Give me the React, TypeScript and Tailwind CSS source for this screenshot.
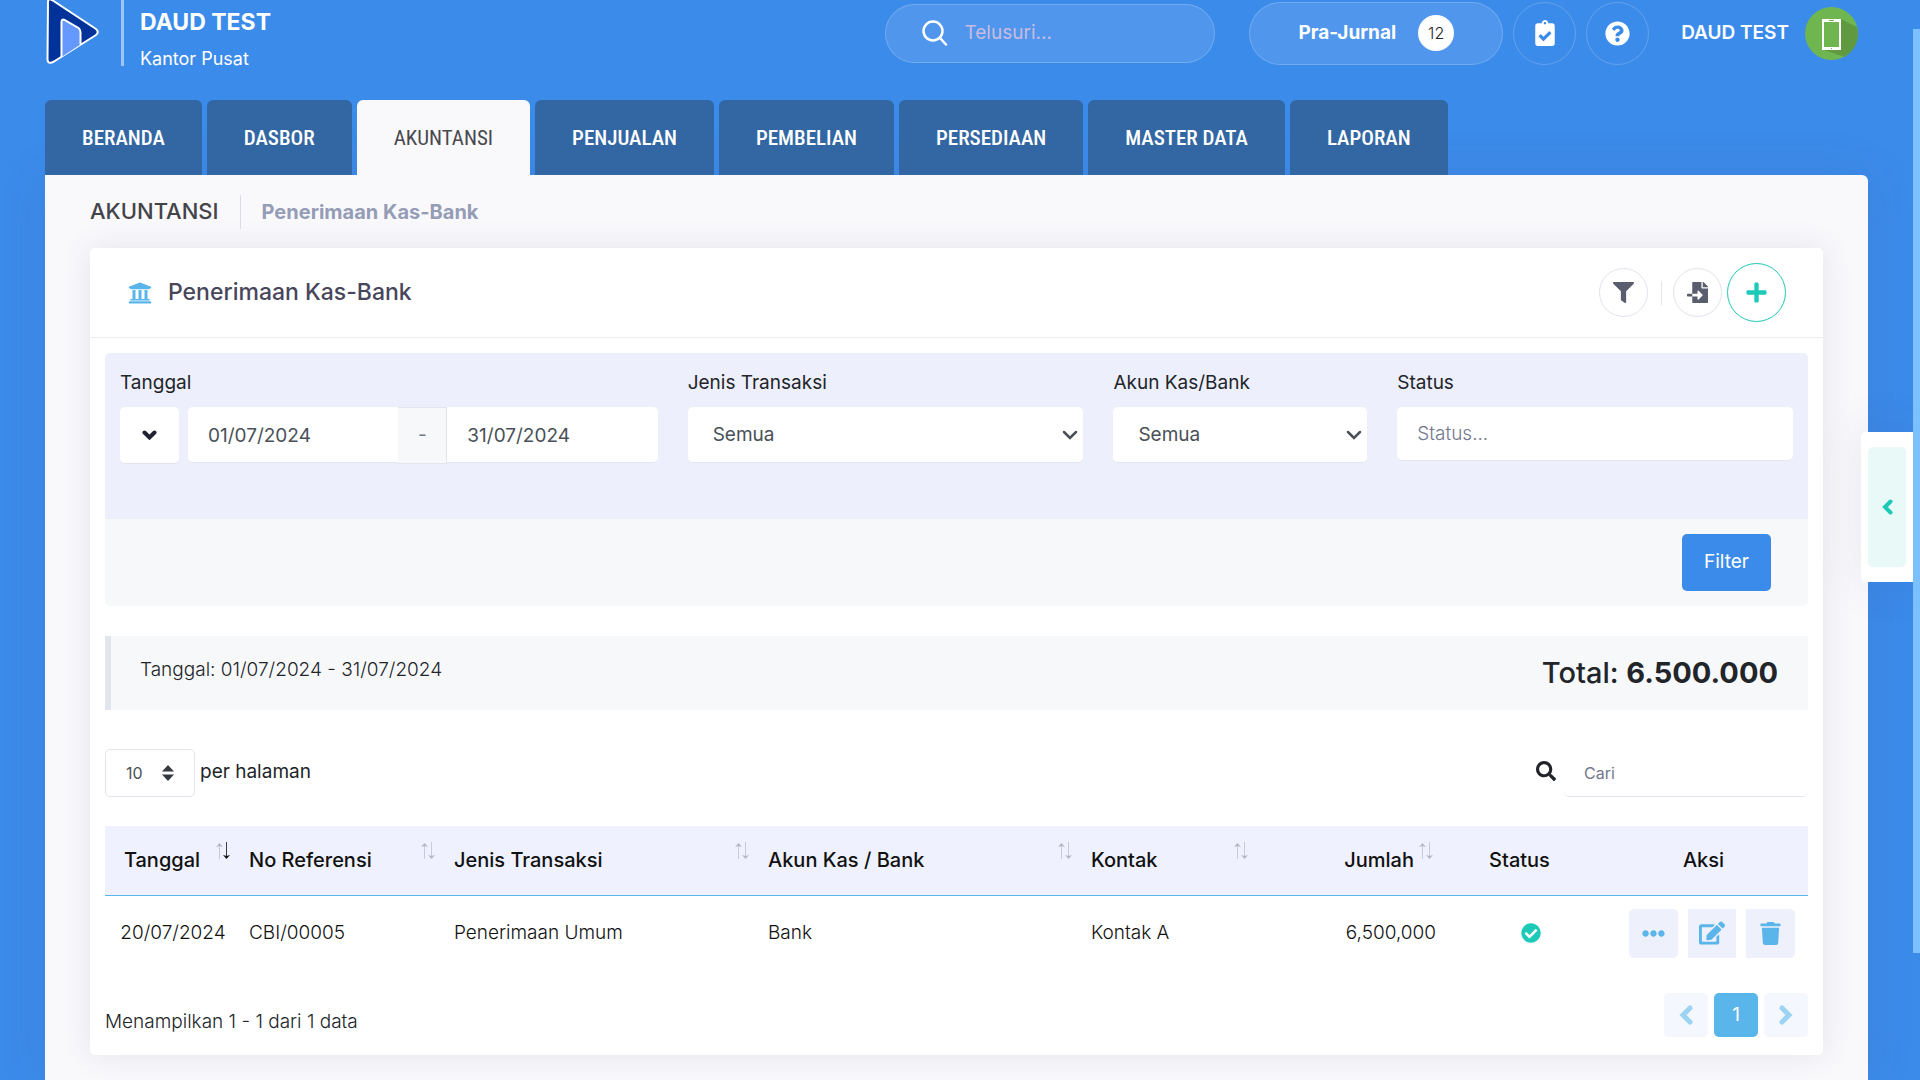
import React, { useState } from 'react';
import {
  FaUniversity,
  FaFilter,
  FaFileImport,
  FaPlus,
  FaSearch,
  FaClipboardCheck,
  FaQuestionCircle,
  FaEllipsisH,
  FaEdit,
  FaTrash,
  FaCheckCircle,
} from 'react-icons/fa';

interface Transaction {
  id: number;
  date: string;
  reference: string;
  type: string;
  account: string;
  contact: string;
  amount: string;
}

interface Column {
  label: string;
  sortable: boolean;
  width: string;
  className: string;
}

const tabs = ['BERANDA', 'DASBOR', 'AKUNTANSI', 'PENJUALAN', 'PEMBELIAN', 'PERSEDIAAN', 'MASTER DATA', 'LAPORAN'];

const columns: Column[] = [
  { label: 'Tanggal', sortable: true, width: 'w-[132px]', className: 'pl-4 pr-[34px] text-center' },
  { label: 'No Referensi', sortable: true, width: 'w-[205px]', className: 'pl-3 pr-[34px] text-left' },
  { label: 'Jenis Transaksi', sortable: true, width: 'w-[314px]', className: 'pl-3 pr-[34px] text-left' },
  { label: 'Akun Kas / Bank', sortable: true, width: 'w-[323px]', className: 'pl-3 pr-[34px] text-left' },
  { label: 'Kontak', sortable: true, width: 'w-[176px]', className: 'pl-3 pr-[34px] text-left' },
  { label: 'Jumlah', sortable: true, width: 'w-[185px]', className: 'pl-3 pr-[26px] text-right' },
  { label: 'Status', sortable: false, width: 'w-[181px]', className: 'pl-3 pr-[34px] text-center' },
  { label: 'Aksi', sortable: false, width: 'w-[187px]', className: 'pl-3 pr-[34px] text-center' },
];

const transactions: Transaction[] = [
  {
    id: 1,
    date: '20/07/2024',
    reference: 'CBI/00005',
    type: 'Penerimaan Umum',
    account: 'Bank',
    contact: 'Kontak A',
    amount: '6,500,000',
  },
];

const Logo = () => (
  <svg width="56" height="66" viewBox="0 0 56 66" className="overflow-visible" aria-hidden="true">
    <path
      d="M3 2 Q3 -2 7 0 L51 29 Q54.500 32 51 35 L9 61.500 Q2.500 65 2.500 59 Z"
      fill="#003399"
      stroke="#fff"
      strokeWidth="2"
      strokeLinejoin="round"
    />
    <path
      d="M16.500 57 V22 Q16.500 18.500 19.500 20 L33.500 28 Q35.500 29.500 35.500 32 V44.500"
      fill="#6699ff"
      stroke="#fff"
      strokeWidth="2"
    />
  </svg>
);

const Avatar = () => (
  <svg width="53" height="53" viewBox="0 0 53 53" aria-hidden="true">
    <defs>
      <clipPath id="avatar-clip">
        <circle cx="26.500" cy="26.500" r="26.500" />
      </clipPath>
    </defs>
    <g clipPath="url(#avatar-clip)">
      <rect width="53" height="53" fill="#6fb651" />
      <path d="M36 12 L56 22 V56 L40 50 L19 43 Z" fill="#5f9a40" />
      <rect x="17" y="12" width="19" height="31" fill="#fff" />
      <rect x="19" y="15" width="15" height="25" fill="#6fb651" />
      <path d="M24 13.500 H29 M26 41.500 H27" stroke="#6fb651" />
    </g>
  </svg>
);

const Chevron = ({ d, viewBox, className }: { d: string; viewBox: string; className: string }) => (
  <svg viewBox={viewBox} className={className} fill="none" stroke="currentColor" aria-hidden="true">
    <path d={d} strokeLinecap="round" strokeLinejoin="miter" />
  </svg>
);

const SortIcon = ({ active }: { active: boolean }) => (
  <svg width="16" height="18" viewBox="0 0 16 18" fill="none" className="absolute right-[6px] top-4" aria-hidden="true">
    <path d="M4.500 17 V2" stroke="#c9c9dc" />
    <path d="M1 5 L4.500 1 L8 5 L4.500 4 Z" fill="#b4b5c6" />
    <path d="M11.500 0 V16" stroke={active ? '#3a3b45' : '#c9c9dc'} />
    <path d="M8 13 L11.500 17 L15 13 L11.500 14 Z" fill={active ? '#111' : '#b4b5c6'} />
  </svg>
);

const fieldClass =
  'w-full h-14 pt-0.5 rounded-[5px] bg-white border-b border-[#e2e5ec] text-[19px] text-[#495057] outline-none';

const FilterSelect = ({ id, label }: { id: string; label: string }) => (
  <>
    <label htmlFor={id} className="block leading-[30px] mb-[9px]">{label}</label>
    <div className="relative">
      <select id={id} className={`${fieldClass} appearance-none pl-[25px] pr-8`}>
        <option>Semua</option>
      </select>
      <Chevron
        d="M2 2 L8 8 L14 2"
        viewBox="0 0 16 11"
        className="pointer-events-none absolute right-[5px] top-[23px] w-4 h-[11px] stroke-[2.500] text-[#495057]"
      />
    </div>
  </>
);

const App: React.FC = () => {
  const [activeTab, setActiveTab] = useState('AKUNTANSI');
  const [startDate, setStartDate] = useState('01/07/2024');
  const [endDate, setEndDate] = useState('31/07/2024');

  return (
    <div className="relative min-h-screen flex flex-col bg-[#3b8bea] pl-[45px] pr-[52px] font-['Inter',sans-serif] text-[19px] text-[#212529] overflow-hidden">
      {/* Header */}
      <header className="flex items-center h-[66px] text-white">
        <div className="flex h-full">
          <a href="#" aria-label="Beranda" className="block"><Logo /></a>
          <div className="ml-5 border-l-[3px] border-white/50 pl-4 pt-1">
            <div className="text-[23px] leading-[36px] font-bold">DAUD TEST</div>
            <div className="text-lg leading-[38px]">Kantor Pusat</div>
          </div>
        </div>

        <div className="ml-auto flex items-center pr-[10px]">
          <div className="flex items-center w-[330px] h-[59px] mr-[34px] px-9 rounded-full bg-white/10 border border-white/20">
            <svg width="26" height="26" viewBox="0 0 26 26" fill="none" stroke="#fff" strokeWidth="2.500" strokeLinecap="round" className="shrink-0" aria-hidden="true">
              <circle cx="11" cy="11" r="9.500" />
              <path d="M18 18 L24 24.500" />
            </svg>
            <input
              type="text"
              aria-label="Telusuri"
              placeholder="Telusuri..."
              className="ml-4 w-full bg-transparent outline-none placeholder:text-[#c9bbe2]"
            />
          </div>
          <button className="flex items-center h-[63px] mr-[10px] px-[48px] rounded-full bg-white/10 border border-white/20 font-bold whitespace-nowrap">
            Pra-Jurnal
            <span className="flex items-center justify-center ml-[22px] w-9 h-9 rounded-full bg-white text-[#212529] text-base font-light">12</span>
          </button>
          <button aria-label="Tugas" className="flex items-center justify-center w-[63px] h-[63px] mr-[10px] rounded-full border border-white/20">
            <FaClipboardCheck className="text-[26px]" />
          </button>
          <button aria-label="Bantuan" className="flex items-center justify-center w-[63px] h-[63px] rounded-full border border-white/20">
            <FaQuestionCircle className="text-[25px]" />
          </button>
          <button className="flex items-center gap-4 ml-8 font-semibold whitespace-nowrap">
            DAUD TEST
            <Avatar />
          </button>
        </div>
      </header>

      {/* Main menu */}
      <nav className="relative z-10 flex gap-[5px] mt-[34px] font-['Roboto_Condensed',sans-serif] text-[21px]">
        {tabs.map(tab => (
          <button
            key={tab}
            onClick={() => setActiveTab(tab)}
            className={`h-[75px] px-[37px] pt-0.5 rounded-t-[6px] whitespace-nowrap ${
              tab === activeTab ? 'bg-[#f9f9fc] text-[#48484d]' : 'bg-[#3267a3] text-white font-medium'
            }`}
          >
            {tab}
          </button>
        ))}
      </nav>

      <main className="flex-1 bg-[#f9f9fc] rounded-tr-[6px] px-[45px] pb-6 shadow-[0_0_50px_rgba(82,63,105,0.1)]">
        <div className="flex items-center h-[73px]">
          <h1 className="text-[22px] font-medium text-[#434349]">AKUNTANSI</h1>
          <span className="w-px h-[34px] mx-[21px] bg-[#dcdce9]"></span>
          <span className="text-[20px] font-bold text-[#959cb6]">Penerimaan Kas-Bank</span>
        </div>

        {/* Card */}
        <section className="bg-white rounded-[5px] shadow-[0_0_30px_rgba(82,63,105,0.12)]">
          <div className="flex items-center h-[90px] pl-[38px] pr-[37px] border-b border-[#ebedf2]">
            <FaUniversity className="text-2xl text-[#5ab5ea]" />
            <h2 className="ml-4 text-[23px] font-medium text-[#48465b]">Penerimaan Kas-Bank</h2>
            <div className="ml-auto flex items-center">
              <button aria-label="Saring" className="flex items-center justify-center w-[49px] h-[49px] rounded-full border border-[#e2e2ec] text-[#595d6e]">
                <FaFilter className="text-[21px]" />
              </button>
              <span className="w-px h-6 ml-[13px] mr-[11px] bg-[#e2e5ec]"></span>
              <button aria-label="Impor" className="flex items-center justify-center w-[49px] h-[49px] mr-[5px] rounded-full border border-[#e2e2ec] text-[#595d6e]">
                <FaFileImport className="text-[21px]" />
              </button>
              <button aria-label="Tambah" className="flex items-center justify-center w-[59px] h-[59px] rounded-full border border-[#1dc9b7] text-[#1dc9b7]">
                <FaPlus className="text-[23px]" />
              </button>
            </div>
          </div>

          <div className="px-[15px] pt-[15px] pb-[18px]">
            {/* Filter form */}
            <form onSubmit={e => e.preventDefault()}>
              <div className="grid grid-cols-12 h-[166px] pt-[15px] rounded-t-[5px] bg-[#edeffc]">
                <div className="col-span-4 px-[15px]">
                  <label htmlFor="start-date" className="block leading-[30px] mb-[9px]">Tanggal</label>
                  <div className="flex">
                    <button type="button" aria-label="Pilih periode" className="flex items-center justify-center shrink-0 w-[59px] h-[57px] mr-[9px] rounded-[5px] bg-white border-b border-[#e2e5ec] text-[#212133]">
                      <Chevron d="M2.500 2.500 L7.500 7.500 L12.500 2.500" viewBox="0 0 15 11" className="w-[15px] h-[11px] stroke-[4]" />
                    </button>
                    <input
                      id="start-date"
                      value={startDate}
                      onChange={e => setStartDate(e.target.value)}
                      className={`${fieldClass} rounded-r-none px-5`}
                    />
                    <span className="flex items-center justify-center shrink-0 w-[49px] h-[57px] bg-[#f7f8fa] border border-l-0 border-[#e2e5ec] text-[#74788d]">-</span>
                    <input
                      aria-label="Tanggal akhir"
                      value={endDate}
                      onChange={e => setEndDate(e.target.value)}
                      className={`${fieldClass} rounded-l-none px-5`}
                    />
                  </div>
                </div>
                <div className="col-span-3 px-[15px]">
                  <FilterSelect id="type" label="Jenis Transaksi" />
                </div>
                <div className="col-span-2 px-[15px]">
                  <FilterSelect id="account" label="Akun Kas/Bank" />
                </div>
                <div className="col-span-3 px-[15px]">
                  <label htmlFor="status" className="block leading-[30px] mb-[9px]">Status</label>
                  <input
                    id="status"
                    placeholder="Status..."
                    className="w-full h-[54px] px-5 rounded-[5px] bg-white border-b border-[#e2e5ec] font-light outline-none placeholder:text-[#74788d]"
                  />
                </div>
              </div>
              <div className="flex justify-end items-center h-[87px] pr-[37px] rounded-b-[5px] bg-[#f7f8fa]">
                <button type="submit" className="h-[57px] px-[22px] rounded-[5px] bg-[#3b8bea] text-white">Filter</button>
              </div>
            </form>

            {/* Summary */}
            <div className="flex justify-between h-[74px] mt-[30px] pl-[29px] pr-[30px] bg-[#f7f8fa] border-l-[6px] border-[#e2e5ec]">
              <p className="pt-5 leading-[28px] font-light">Tanggal: 01/07/2024 - 31/07/2024</p>
              <p className="self-center text-[29px] leading-[36px] font-medium">
                Total: <strong className="font-bold">6.500.000</strong>
              </p>
            </div>

            {/* Table controls */}
            <div className="flex items-center justify-between h-12 mt-[39px]">
              <div className="flex items-center">
                <div className="relative">
                  <select id="page-length" className="appearance-none w-[90px] h-12 pl-5 rounded-[5px] border border-[#e2e5ec] bg-white text-base text-[#495057] outline-none">
                    <option>10</option>
                    <option>25</option>
                  </select>
                  <svg width="12" height="16" viewBox="0 0 12 16" fill="#343a40" className="pointer-events-none absolute right-[21px] top-4" aria-hidden="true">
                    <path d="M6 0 L12 6.500 H0 Z M6 16 L12 9.500 H0 Z" />
                  </svg>
                </div>
                <label htmlFor="page-length" className="ml-[5px] pb-0.5">per halaman</label>
              </div>
              <div className="flex items-center">
                <label htmlFor="table-search" aria-label="Cari" className="pb-1">
                  <FaSearch className="text-xl" />
                </label>
                <input
                  id="table-search"
                  placeholder="Cari"
                  className="ml-2 w-[244px] h-12 px-5 rounded-[5px] border-b border-[#e2e5ec] text-base outline-none placeholder:text-[#74788d]"
                />
              </div>
            </div>

            <table className="w-full mt-[29px] table-fixed border-collapse">
              <thead>
                <tr className="h-[69px] bg-[#eff1fe] border-b border-[#5ab5ea]">
                  {columns.map((column, index) => (
                    <th key={column.label} className={`relative text-[20px] font-medium text-[#111] whitespace-nowrap ${column.width} ${column.className}`}>
                      {column.label}
                      {column.sortable && <SortIcon active={index === 0} />}
                    </th>
                  ))}
                </tr>
              </thead>
              <tbody>
                {transactions.map(item => (
                  <tr key={item.id} className="h-[76px] font-light text-[#111]">
                    <td className="pl-1 text-center">{item.date}</td>
                    <td className="px-3">{item.reference}</td>
                    <td className="px-3">{item.type}</td>
                    <td className="px-3">{item.account}</td>
                    <td className="px-3">{item.contact}</td>
                    <td className="px-1 text-right">{item.amount}</td>
                    <td>
                      <FaCheckCircle className="mx-auto text-xl text-[#1dc9b7]" title="Disetujui" />
                    </td>
                    <td className="px-[13px]">
                      <div className="flex justify-end gap-[10px] text-[#5ab5ea]">
                        <button aria-label="Lainnya" className="flex items-center justify-center shrink-0 w-[49px] h-[49px] rounded-[5px] bg-[#eef0fb]">
                          <FaEllipsisH className="text-[23px]" />
                        </button>
                        <button aria-label="Ubah" className="flex items-center justify-center shrink-0 w-12 h-[49px] bg-[#eef0fb]">
                          <FaEdit className="text-[26px]" />
                        </button>
                        <button aria-label="Hapus" className="flex items-center justify-center shrink-0 w-[49px] h-[49px] rounded-r-[5px] bg-[#eef0fb]">
                          <FaTrash className="text-[23px]" />
                        </button>
                      </div>
                    </td>
                  </tr>
                ))}
              </tbody>
            </table>

            <div className="flex items-center justify-between mt-[22px]">
              <p className="pt-[14px] font-light">Menampilkan 1 - 1 dari 1 data</p>
              <div className="flex gap-[6px]">
                <button aria-label="Sebelumnya" className="flex items-center justify-center w-11 h-11 rounded-[5px] bg-[#f5f7fe] text-[#9bd4f1]">
                  <Chevron d="M11 3 L4 10 L11 17" viewBox="0 0 14 20" className="w-[14px] h-5 stroke-[5]" />
                </button>
                <button className="w-11 h-11 rounded-[5px] bg-[#5ab5ea] text-white">1</button>
                <button aria-label="Berikutnya" className="flex items-center justify-center w-11 h-11 rounded-[5px] bg-[#f5f7fe] text-[#9bd4f1]">
                  <Chevron d="M3 3 L10 10 L3 17" viewBox="0 0 14 20" className="w-[14px] h-5 stroke-[5]" />
                </button>
              </div>
            </div>
          </div>
        </section>
      </main>

      {/* Side panel toggle */}
      <div className="absolute right-[7px] top-[432px] p-[15px_7px_15px_7px] rounded-l-[5px] bg-white shadow-[0_0_50px_rgba(82,63,105,0.1)]">
        <button aria-label="Buka panel" className="flex items-center justify-center w-[38px] h-[120px] rounded-[5px] bg-[#e8f9f8] text-[#1dc9b7]">
          <Chevron d="M8.500 2.500 L3 8 L8.500 13.500" viewBox="0 0 11 16" className="w-[11px] h-4 stroke-[4]" />
        </button>
      </div>

      {/* Page scroll indicator */}
      <div className="absolute right-0 top-[29px] w-[7px] h-[924px] bg-[#7cc1ff]"></div>
    </div>
  );
};

export default App;
